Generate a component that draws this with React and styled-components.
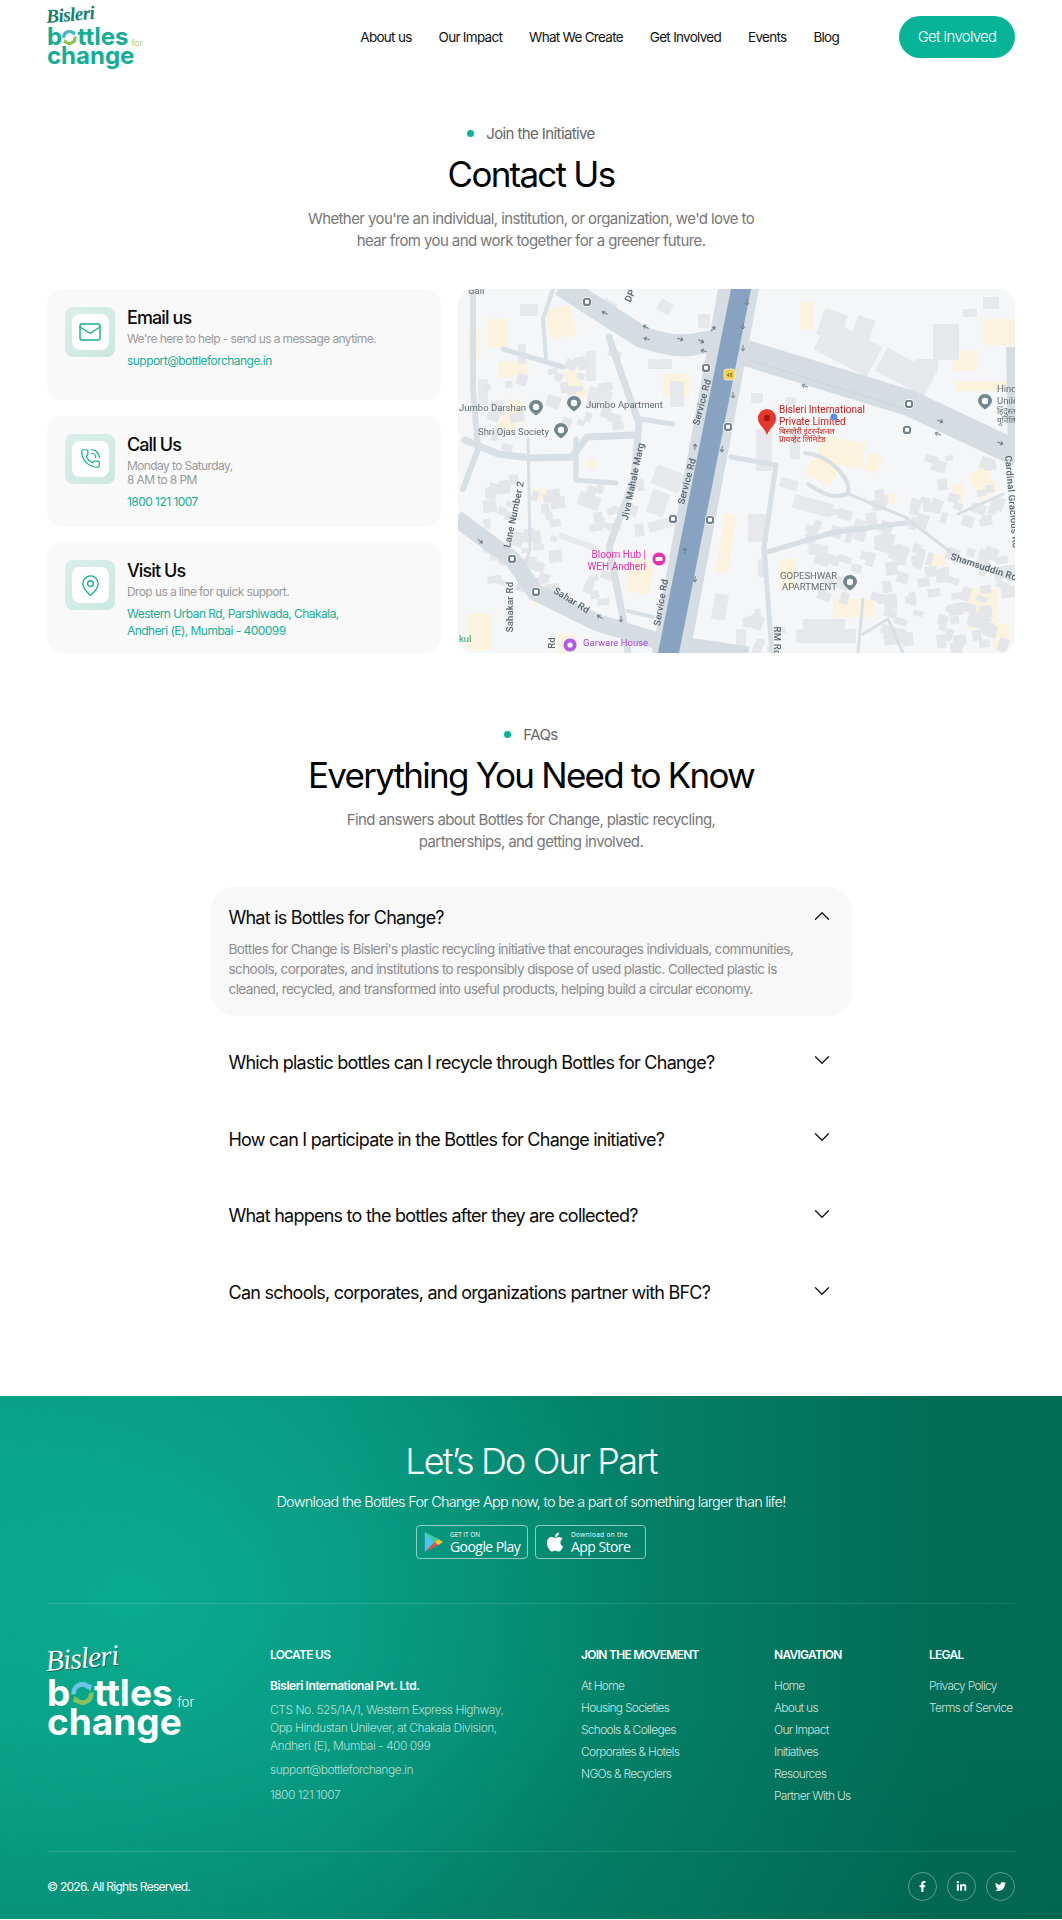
import React from 'react';
import styled, { createGlobalStyle } from 'styled-components';
import { Mail, PhoneCall, MapPin, ChevronUp, ChevronDown } from 'lucide-react';
import { FaApple, FaFacebookF, FaLinkedinIn, FaTwitter } from 'react-icons/fa';

const GlobalStyle = createGlobalStyle`
  * { box-sizing: border-box; }
  html, body { margin: 0; padding: 0; background: #fff; }
  body { font-family: 'Inter', 'Liberation Sans', sans-serif; color: #000; letter-spacing: -0.045em; }
  ul { list-style: none; margin: 0; padding: 0; }
  p, h1, h2, h3, h4 { margin: 0; font-weight: 400; }
`;

const navLinks = ['About us', 'Our Impact', 'What We Create', 'Get Involved', 'Events', 'Blog'];

const faqs = [
  'Which plastic bottles can I recycle through Bottles for Change?',
  'How can I participate in the Bottles for Change initiative?',
  'What happens to the bottles after they are collected?',
  'Can schools, corporates, and organizations partner with BFC?',
];

const footerColumns = [
  { title: 'JOIN THE MOVEMENT', items: ['At Home', 'Housing Societies', 'Schools & Colleges', 'Corporates & Hotels', 'NGOs & Recyclers'] },
  { title: 'NAVIGATION', items: ['Home', 'About us', 'Our Impact', 'Initiatives', 'Resources', 'Partner With Us'] },
  { title: 'LEGAL', items: ['Privacy Policy', 'Terms of Service'] },
];

// map data, in map pixels (557 x 364)
const minorRoads = [
  ['M151 48 L165 90 L181 134 L176 190 L151 258 L166 334 L170 364', 7],
  ['M7 151 L40 165 L73 169 L114 168 L129 148 L177 146', 7],
  ['M118 150 L118 191 L158 194', 5],
  ['M273 168 L318 176 L306 258 L314 364', 5],
  ['M306 264 L373 244 L447 234', 5],
  ['M388 204 L447 228 L499 268 L554 291', 3],
  ['M347 164 C 370 165 395 190 390 205 C 375 210 365 205 350 195', 4],
  ['M15 0 L15 100 L20 160 L5 200', 6],
  ['M70 150 L72 260 L60 300', 3],
  ['M45 60 L105 78', 5],
  ['M95 0 L85 30 L88 70', 4],
  ['M182 130 L215 135', 5],
  ['M170 322 L195 328', 4],
  ['M500 225 L545 205', 3],
  ['M400 364 L405 310 M405 345 L430 330 L445 364', 3],
];

const grayBlocks = [
  [360, 42, 60, 34, 28], [420, 70, 55, 26, 28], [362, 22, 24, 28, 20], [395, 28, 18, 30, 20],
  [293, 104, 12, 10, 0], [328, 108, 10, 8, 0], [298, 140, 16, 42, 0], [290, 225, 20, 28, 0],
  [475, 35, 26, 36, 0], [458, 70, 22, 14, 0], [505, 20, 14, 8, 0], [525, 8, 16, 12, 0],
  [128, 62, 10, 30, 0], [60, 55, 8, 20, 0], [120, 205, 22, 14, 20], [190, 230, 30, 10, -15],
  [335, 210, 40, 14, 15], [350, 255, 20, 12, 10], [300, 270, 10, 18, 0], [338, 340, 60, 14, 0],
  [145, 12, 14, 6, 30], [240, 25, 12, 14, 0], [188, 205, 24, 18, -70], [200, 175, 20, 30, -70],
  [100, 250, 40, 6, 20], [345, 330, 42, 16, 0], [278, 340, 10, 20, 0], [255, 305, 14, 26, 10],
  [212, 92, 14, 26, 0], [190, 70, 24, 10, 0], [130, 100, 24, 12, 15], [20, 90, 10, 26, 0],
  [62, 15, 18, 12, 0], [200, 12, 14, 12, 30], [332, 140, 10, 30, 0], [322, 190, 18, 10, 15],
];

const tanBlocks = [
  [30, 30, 20, 28, 0], [90, 18, 26, 30, -12], [205, 85, 26, 22, 0], [342, 12, 14, 28, 0],
  [360, 150, 46, 26, 10], [350, 172, 28, 20, 30], [495, 62, 24, 20, 0], [525, 30, 32, 26, 0],
  [498, 92, 50, 10, 0], [262, 225, 12, 60, 8], [4, 235, 22, 14, 35], [10, 325, 24, 36, 0],
  [70, 290, 20, 24, -20], [170, 270, 24, 34, 10], [322, 270, 16, 30, 0], [375, 310, 40, 18, 0],
  [100, 345, 18, 19, 0], [510, 300, 30, 40, 0], [515, 180, 20, 28, -30], [45, 110, 16, 34, 20],
  [210, 290, 8, 20, 8], [420, 250, 16, 10, 0], [110, 80, 14, 30, -25], [40, 72, 30, 16, 0],
  [10, 40, 12, 30, 0], [130, 170, 8, 10, 0], [408, 165, 14, 18, 20], [495, 195, 10, 24, 0],
  [470, 265, 18, 12, 0], [425, 205, 12, 10, 0], [75, 200, 14, 10, 0], [535, 335, 16, 26, 0],
];

const clusters = [
  [25, 185, 70, 110, 46], [415, 245, 130, 110, 76], [345, 200, 80, 50, 18], [445, 165, 90, 70, 26],
  [85, 55, 70, 80, 20], [125, 185, 55, 55, 14], [25, 85, 35, 70, 10], [280, 310, 50, 50, 8],
  [355, 260, 60, 50, 14], [120, 270, 30, 60, 6],
];

const makeScatter = () => {
  let seed = 17;
  const next = () => {
    seed = (seed * 16807) % 2147483647;
    return seed / 2147483647;
  };
  const out = [];
  clusters.forEach(([x, y, w, h, n]) => {
    for (let i = 0; i < n; i += 1) {
      out.push([x + next() * w, y + next() * h, 6 + next() * 9, 5 + next() * 9, next() > 0.5 ? 18 : -8]);
    }
  });
  return out;
};
const scatterBlocks = makeScatter();

const busStops = [[129, 13], [248, 79], [270, 138], [215, 230], [252, 231], [54, 270], [78, 303], [451, 115], [449, 141]];

const trafficArrows = [
  [147, 24, 205], [188, 38, 210], [189, 50, 195], [222, 50, 15], [243, 52, 30], [246, 62, 195], [255, 40, 315],
  [289, 13, 90], [285, 37, 90], [285, 59, 90], [275, 106, 90], [264, 160, 95], [237, 158, 275], [227, 262, 275],
  [237, 290, 95], [347, 97, 200], [482, 132, 20], [480, 145, 200], [542, 154, 20], [22, 252, 40], [163, 330, 90], [142, 328, 210],
];

const greyPins = [[78, 118], [116, 114], [103, 141], [392, 293], [527, 112]];

const mapLabels = [
  { x: 1, y: 122, text: 'Jumbo Darshan' },
  { x: 128, y: 119, text: 'Jumbo Apartment' },
  { x: 20, y: 146, text: 'Shri Ojas Society' },
  { x: 322, y: 290, text: 'GOPESHWAR' },
  { x: 324, y: 301, text: 'APARTMENT' },
  { x: 539, y: 103, text: 'Hind' },
  { x: 539, y: 115, text: 'Unile' },
  { x: 10, y: 5, text: 'Gali' },
];

const roadLabels = [
  { x: 247, y: 114, r: -75, text: 'Service Rd' },
  { x: 232, y: 193, r: -75, text: 'Service Rd' },
  { x: 206, y: 314, r: -80, text: 'Service Rd' },
  { x: 178, y: 193, r: -78, text: 'Jiva Mahale Marg' },
  { x: 59, y: 226, r: -78, text: 'Lane Number 2' },
  { x: 55, y: 318, r: -90, text: 'Sahakar Rd' },
  { x: 112, y: 314, r: 32, text: 'Sahar Rd' },
  { x: 316, y: 352, r: 90, text: 'RM Rd' },
  { x: 525, y: 281, r: 18, text: 'Shamsuddin Rd' },
  { x: 551, y: 213, r: 85, text: 'Cardinal Gracious Rd' },
  { x: 97, y: 354, r: -90, text: 'Rd' },
  { x: 175, y: 8, r: -65, text: 'DP' },
];

const Page = styled.div`
  width: 100%;
  background: #fff;
`;

const Header = styled.header`
  height: 73px;
  padding: 0 47px;
  display: flex;
  align-items: center;
  justify-content: space-between;
`;

const Nav = styled.nav`
  display: flex;
  align-items: center;
  gap: 27px;
  margin-left: auto;
  margin-right: 60px;
`;

const NavLink = styled.a`
  font-size: 13.5px;
  color: #111;
  white-space: nowrap;
`;

const CtaButton = styled.a`
  width: 116px;
  height: 42px;
  border-radius: 21px;
  background: #07b498;
  color: #fff;
  font-size: 15px;
  font-weight: 300;
  display: flex;
  align-items: center;
  justify-content: center;
`;

const LogoWrap = styled.div`
  display: flex;
  flex-direction: column;
  font-size: ${(p) => p.$size}px;
  color: ${(p) => p.$color};
  line-height: 0.8;
  font-weight: 700;
`;

const LogoBrand = styled.span`
  font-family: 'Liberation Serif', serif;
  font-style: italic;
  font-weight: ${(p) => p.$weight};
  font-size: 0.8em;
  line-height: 1;
  letter-spacing: -0.03em;
  margin-bottom: 0.04em;
  color: ${(p) => p.$color};
  transform: rotate(-5deg);
  transform-origin: left bottom;
  text-shadow: ${(p) => p.$shadow};
`;

const LogoLine = styled.span`
  display: flex;
  align-items: center;
  white-space: nowrap;
  letter-spacing: 0;
`;

const LogoFor = styled.span`
  font-size: 0.36em;
  font-weight: 300;
  margin-left: 0.35em;
  align-self: flex-end;
  color: ${(p) => p.$color};
`;

const Section = styled.section`
  display: flex;
  flex-direction: column;
  align-items: center;
  padding: ${(p) => p.$top}px 47px 0;
`;

const Eyebrow = styled.div`
  display: flex;
  align-items: center;
  gap: 12px;
  height: 22px;
  font-size: 15px;
  letter-spacing: -0.04em;
  color: #666;
`;

const Dot = styled.span`
  width: 7px;
  height: 7px;
  border-radius: 50%;
  background: #07b498;
`;

const Title = styled.h2`
  margin-top: 7px;
  font-size: 35px;
  line-height: 46px;
  letter-spacing: -0.05em;
  color: #000;
`;

const Lead = styled.p`
  margin-top: 11px;
  width: ${(p) => p.$width}px;
  font-size: 15px;
  line-height: 22px;
  letter-spacing: -0.04em;
  color: #777;
  text-align: center;
`;

const ContactGrid = styled.div`
  width: 100%;
  margin-top: 37px;
  display: grid;
  grid-template-columns: 394px 1fr;
  column-gap: 17px;
`;

const CardStack = styled.div`
  display: grid;
  grid-template-rows: repeat(3, 111px);
  row-gap: 15.5px;
`;

const ContactCard = styled.article`
  display: flex;
  gap: 12px;
  padding: 17px 18px;
  border-radius: 16px;
  background: #f9f9f9;
`;

const IconTile = styled.div`
  width: 50px;
  height: 50px;
  flex: none;
  margin-top: 1px;
  padding: 7px 6.5px;
  border-radius: 8px;
  background: linear-gradient(135deg, #dcefea, #c9e8e0);
`;

const IconInner = styled.div`
  width: 100%;
  height: 100%;
  border-radius: 8px;
  background: #fff;
  color: #14ae96;
  display: flex;
  align-items: center;
  justify-content: center;
`;

const CardBody = styled.div`
  display: flex;
  flex-direction: column;
`;

const CardTitle = styled.h3`
  font-size: 18px;
  line-height: 24px;
  font-weight: 500;
  letter-spacing: -0.05em;
  color: #0a0a0a;
`;

const CardText = styled.p`
  font-size: 12px;
  line-height: 14.5px;
  letter-spacing: -0.05em;
  color: #9a9a9a;
  margin-top: 2px;
`;

const CardLink = styled.p`
  font-size: 12px;
  line-height: 17.5px;
  letter-spacing: -0.045em;
  color: #17ae97;
  margin-top: 5px;
`;

const MapPanel = styled.div`
  height: 364px;
  border-radius: 16px;
  overflow: hidden;
  background: #f5f6f7;
`;

const MapSvg = styled.svg`
  display: block;
  width: 100%;
  height: 100%;
  font-family: 'Roboto', 'Noto Sans', sans-serif;
  letter-spacing: 0;
  filter: blur(0.35px);
`;

const Accordion = styled.div`
  width: 641px;
  margin-top: 34px;
  margin-bottom: 73px;
  display: flex;
  flex-direction: column;
  gap: 15.75px;
`;

const FaqItem = styled.div`
  padding: 18px 17px ${(p) => (p.$open ? 17 : 18)}px 18px;
  border-radius: 24px;
  background: ${(p) => (p.$open ? '#f8f8f8' : 'transparent')};
`;

const FaqHead = styled.div`
  display: flex;
  align-items: center;
  justify-content: space-between;
  color: #111;
`;

const FaqChevron = styled.span`
  display: flex;
  height: 25px;
  align-items: center;
  margin-top: -4px;
`;

const FaqQuestion = styled.h4`
  font-size: 18px;
  line-height: 25px;
  font-weight: 400;
  letter-spacing: -0.042em;
  color: #0a0a0a;
`;

const FaqAnswer = styled.p`
  margin-top: 9px;
  width: 580px;
  font-size: 13.5px;
  line-height: 20px;
  letter-spacing: -0.042em;
  color: #8c8c8c;
`;

const Footer = styled.footer`
  height: 523px;
  padding: 42px 47px 20px;
  color: #fff;
  background:
    radial-gradient(ellipse 520px 400px at 13% 38%, rgba(12, 184, 155, 0.6) 0%, rgba(12, 184, 155, 0) 100%),
    linear-gradient(180deg, rgba(0, 60, 50, 0) 60%, rgba(0, 60, 50, 0.12) 100%),
    linear-gradient(90deg, #079a80 0%, #06917a 30%, #037f66 62%, #016d55 88%, #016c54 100%);
`;

const Cta = styled.div`
  display: flex;
  flex-direction: column;
  align-items: center;
`;

const CtaTitle = styled.h2`
  font-size: 36px;
  line-height: 46px;
  font-weight: 300;
  letter-spacing: -0.05em;
`;

const CtaText = styled.p`
  margin-top: 6px;
  font-size: 14.5px;
  line-height: 24px;
  font-weight: 300;
  letter-spacing: -0.05em;
`;

const StoreRow = styled.div`
  margin-top: 11px;
  display: flex;
  gap: 7px;
`;

const StoreButton = styled.a`
  width: ${(p) => p.$width}px;
  height: 34px;
  padding-left: ${(p) => p.$pad}px;
  border: 1px solid rgba(255, 255, 255, 0.55);
  border-radius: 4px;
  display: flex;
  align-items: center;
  gap: ${(p) => p.$gap}px;
`;

const StoreText = styled.span`
  display: flex;
  flex-direction: column;
  white-space: nowrap;
  font-family: 'Open Sans', sans-serif;
`;

const StoreSmall = styled.span`
  font-size: 6.5px;
  line-height: 9px;
  font-weight: 500;
  letter-spacing: ${(p) => (p.$spaced ? '0.05em' : '-0.01em')};
`;

const StoreBig = styled.span`
  font-size: 14px;
  line-height: 15px;
  font-weight: 500;
  letter-spacing: -0.04em;
`;

const Rule = styled.hr`
  margin: ${(p) => p.$margin};
  border: 0;
  height: 1px;
  background: rgba(255, 255, 255, 0.12);
`;

const FooterGrid = styled.div`
  display: grid;
  grid-template-columns: 223px 311px 193px 155px 1fr;
  height: 204px;
`;

const FooterHead = styled.h4`
  font-size: 12px;
  line-height: 16px;
  font-weight: 600;
  margin-bottom: 12px;
  white-space: nowrap;
`;

const FooterItem = styled.li`
  font-size: 12px;
  line-height: 22px;
  font-weight: 300;
  color: rgba(255, 255, 255, 0.82);
  white-space: nowrap;
`;

const FooterCompany = styled.p`
  font-size: 12px;
  line-height: 22px;
  font-weight: 600;
  letter-spacing: -0.035em;
  margin-bottom: 4px;
`;

const FooterAddress = styled.p`
  font-size: 12px;
  line-height: 18px;
  font-weight: 300;
  letter-spacing: -0.04em;
  color: rgba(255, 255, 255, 0.7);
  margin-bottom: ${(p) => p.$gap}px;
`;

const FooterBottom = styled.div`
  display: flex;
  align-items: center;
  justify-content: space-between;
`;

const Copyright = styled.p`
  font-size: 12px;
  font-weight: 400;
`;

const SocialRow = styled.div`
  display: flex;
  gap: 10px;
`;

const SocialIcon = styled.a`
  width: 29px;
  height: 29px;
  border: 1px solid rgba(255, 255, 255, 0.35);
  border-radius: 50%;
  font-size: 11px;
  display: flex;
  align-items: center;
  justify-content: center;
`;

const LoopO = ({ left, right }) => (
  <svg viewBox="0 0 24 24" width="0.62em" height="0.62em" style={{ margin: '0.06em 0.01em 0' }}>
    <path d="M3 13 A9 9 0 0 1 19 6" fill="none" stroke={left} strokeWidth="5" />
    <path d="M15 2 L22 3 L20 10 Z" fill={left} />
    <path d="M21 11 A9 9 0 0 1 5 18" fill="none" stroke={right} strokeWidth="5" />
    <path d="M9 22 L2 21 L4 14 Z" fill={right} />
  </svg>
);

const Logo = ({ size, color, brandColor, brandWeight, brandShadow, forColor, loopLeft, loopRight }) => (
  <LogoWrap $size={size} $color={color}>
    <LogoBrand $color={brandColor} $weight={brandWeight} $shadow={brandShadow}>Bisleri</LogoBrand>
    <LogoLine>
      b<LoopO left={loopLeft} right={loopRight} />ttles
      <LogoFor $color={forColor}>for</LogoFor>
    </LogoLine>
    <LogoLine>change</LogoLine>
  </LogoWrap>
);

const BusStop = ({ x, y }) => (
  <g transform={`translate(${x} ${y})`}>
    <rect x="-4.5" y="-4.5" width="9" height="9" rx="3" fill="#6d7f8a" stroke="#fff" strokeWidth="1" />
    <rect x="-2" y="-2.2" width="4" height="4" rx="0.8" fill="#fff" />
  </g>
);

const GreyPin = ({ x, y }) => (
  <g transform={`translate(${x} ${y})`}>
    <path d="M-7.5 0 A7.5 7.5 0 1 1 7.5 0 Q7 4 0 9 Q-7 4 -7.5 0 Z" fill="#72868f" stroke="#fff" strokeWidth="0.8" />
    <circle r="3.2" fill="#fff" />
  </g>
);

const MapDrawing = () => (
  <MapSvg viewBox="0 0 557 364" preserveAspectRatio="none">
    <rect width="557" height="364" fill="#f5f6f7" />
    {tanBlocks.map(([x, y, w, h, r], i) => (
      <rect key={`t${i}`} x={x} y={y} width={w} height={h} rx="1" fill="#fbf3de" transform={`rotate(${r} ${x + w / 2} ${y + h / 2})`} />
    ))}
    {grayBlocks.map(([x, y, w, h, r], i) => (
      <rect key={`g${i}`} x={x} y={y} width={w} height={h} rx="1" fill="#e6e8ec" transform={`rotate(${r} ${x + w / 2} ${y + h / 2})`} />
    ))}
    {scatterBlocks.map(([x, y, w, h, r], i) => (
      <rect key={`s${i}`} x={x} y={y} width={w} height={h} fill="#e4e6ea" transform={`rotate(${r} ${x + w / 2} ${y + h / 2})`} />
    ))}
    {minorRoads.map(([d, w], i) => (
      <path key={`m${i}`} d={d} fill="none" stroke="#d8dfe5" strokeWidth={w} strokeLinejoin="round" strokeLinecap="round" />
    ))}
    <path d="M103 -4 L129 13 L184 48 Q212 58 232 56 L266 50" fill="none" stroke="#d5dde3" strokeWidth="22" />
    <path d="M288 64 L451 114 L560 165" fill="none" stroke="#d5dde3" strokeWidth="26" />
    <path d="M554 58 L556 170" fill="none" stroke="#d5dde3" strokeWidth="12" />
    <path d="M-2 229 L55 271 L77 303 L140 334 L203 353 L290 366" fill="none" stroke="#d5dde3" strokeWidth="17" />
    <polygon points="260,0 301,0 232,364 194,364" fill="#d5dde3" />
    <polygon points="273,0 293,0 221,364 200,364" fill="#88a2c1" />
    <path d="M288 70 L451 121" fill="none" stroke="#c3ccd3" strokeWidth="0.6" />

    {trafficArrows.map(([x, y, r], i) => (
      <path key={`a${i}`} d="M-3 0 L3 0 M0.5 -2 L3 0 L0.5 2" transform={`translate(${x} ${y}) rotate(${r})`} fill="none" stroke="#6f7f88" strokeWidth="1" />
    ))}
    {busStops.map(([x, y]) => <BusStop key={`${x}-${y}`} x={x} y={y} />)}
    {greyPins.map(([x, y]) => <GreyPin key={`${x}-${y}`} x={x} y={y} />)}

    <rect x="266" y="80" width="11" height="11" rx="2.5" fill="#f4d04f" stroke="#fff" strokeWidth="0.6" />
    <text x="271.5" y="88" fontSize="5.5" textAnchor="middle" fill="#6d5a10">48</text>

    <g fontSize="9.5" fill="#5f6d75">
      {mapLabels.map((l) => <text key={l.text} x={l.x} y={l.y}>{l.text}</text>)}
      <text x="539" y="125" fontSize="8">हिंदुस्तान</text>
      <text x="539" y="134" fontSize="8">युनिलिव्हर</text>
    </g>
    <g fontSize="9.5" fill="#55636b" fontWeight="500" letterSpacing="0.2">
      {roadLabels.map((l) => (
        <text key={`${l.text}${l.x}`} textAnchor="middle" transform={`translate(${l.x} ${l.y}) rotate(${l.r})`}>{l.text}</text>
      ))}
    </g>

    <path d="M309 146 C306 138 300 136 300 129 A9 9 0 1 1 318 129 C318 136 312 138 309 146 Z" fill="#e8362d" />
    <circle cx="309" cy="129" r="3.2" fill="#a31912" />
    <g fontSize="10" fill="#c5221f">
      <text x="321" y="124">Bisleri International</text>
      <text x="321" y="135.5">Private Limited</text>
      <text x="321" y="145" fontSize="8">बिसलेरी इंटरनॅशनल</text>
      <text x="321" y="153" fontSize="8">प्रायव्हेट लिमिटेड</text>
    </g>
    <circle cx="376" cy="128" r="3.5" fill="#5b8def" />

    <g fontSize="10" fill="#e134b0">
      <text x="188" y="269" textAnchor="end">Bloom Hub |</text>
      <text x="188" y="281" textAnchor="end">WEH Andheri</text>
    </g>
    <circle cx="201" cy="270" r="7" fill="#e134b0" stroke="#fff" strokeWidth="0.8" />
    <rect x="197.5" y="268" width="7" height="4" rx="1" fill="#fff" />

    <text x="125" y="357" fontSize="9.5" fill="#a346d8">Garware House</text>
    <circle cx="112" cy="356" r="7" fill="#b35ae3" stroke="#fff" strokeWidth="0.8" />
    <circle cx="112" cy="356" r="2.6" fill="#fff" />
    <text x="1" y="353" fontSize="9.5" fill="#2f9c6a">kul</text>
  </MapSvg>
);

const PlayIcon = () => (
  <svg viewBox="0 0 24 26" width="20" height="22">
    <path d="M1 1 L13 13 L1 25 Z" fill="#4fc3f0" />
    <path d="M1 1 L17 9.5 L13 13 Z" fill="#38d58a" />
    <path d="M1 25 L17 16.5 L13 13 Z" fill="#e9504f" />
    <path d="M17 9.5 L23 13 L17 16.5 L13 13 Z" fill="#fbc531" />
  </svg>
);

const App = () => (
  <Page>
    <GlobalStyle />
    <Header>
      <Logo size={24} color="#14ae96" brandColor="#157f70" brandWeight={700} forColor="#8cc152" loopLeft="#45b6c6" loopRight="#8cc152" />
      <Nav>
        {navLinks.map((link) => <NavLink key={link}>{link}</NavLink>)}
      </Nav>
      <CtaButton>Get Involved</CtaButton>
    </Header>

    <Section $top={49}>
      <Eyebrow><Dot />Join the Initiative</Eyebrow>
      <Title>Contact Us</Title>
      <Lead $width={460}>
        Whether you're an individual, institution, or organization, we'd love to hear from you and work together for a greener future.
      </Lead>
      <ContactGrid>
        <CardStack>
          <ContactCard>
            <IconTile><IconInner><Mail size={24} strokeWidth={1.4} /></IconInner></IconTile>
            <CardBody>
              <CardTitle>Email us</CardTitle>
              <CardText>We're here to help - send us a message anytime.</CardText>
              <CardLink>support@bottleforchange.in</CardLink>
            </CardBody>
          </ContactCard>
          <ContactCard>
            <IconTile><IconInner><PhoneCall size={21} strokeWidth={1.4} /></IconInner></IconTile>
            <CardBody>
              <CardTitle>Call Us</CardTitle>
              <CardText>Monday to Saturday,<br />8 AM to 8 PM</CardText>
              <CardLink>1800 121 1007</CardLink>
            </CardBody>
          </ContactCard>
          <ContactCard>
            <IconTile><IconInner><MapPin size={23} strokeWidth={1.4} /></IconInner></IconTile>
            <CardBody>
              <CardTitle>Visit Us</CardTitle>
              <CardText>Drop us a line for quick support.</CardText>
              <CardLink>Western Urban Rd, Parshiwada, Chakala,<br />Andheri (E), Mumbai - 400099</CardLink>
            </CardBody>
          </ContactCard>
        </CardStack>
        <MapPanel><MapDrawing /></MapPanel>
      </ContactGrid>
    </Section>

    <Section $top={70}>
      <Eyebrow><Dot />FAQs</Eyebrow>
      <Title>Everything You Need to Know</Title>
      <Lead $width={400}>
        Find answers about Bottles for Change, plastic recycling, partnerships, and getting involved.
      </Lead>
      <Accordion>
        <FaqItem $open>
          <FaqHead>
            <FaqQuestion>What is Bottles for Change?</FaqQuestion>
            <FaqChevron><ChevronUp size={26} strokeWidth={1.2} /></FaqChevron>
          </FaqHead>
          <FaqAnswer>
            Bottles for Change is Bisleri's plastic recycling initiative that encourages individuals, communities, schools, corporates, and institutions to responsibly dispose of used plastic. Collected plastic is cleaned, recycled, and transformed into useful products, helping build a circular economy.
          </FaqAnswer>
        </FaqItem>
        {faqs.map((q) => (
          <FaqItem key={q}>
            <FaqHead>
              <FaqQuestion>{q}</FaqQuestion>
              <FaqChevron><ChevronDown size={26} strokeWidth={1.2} /></FaqChevron>
            </FaqHead>
          </FaqItem>
        ))}
      </Accordion>
    </Section>

    <Footer>
      <Cta>
        <CtaTitle>Let’s Do Our Part</CtaTitle>
        <CtaText>Download the Bottles For Change App now, to be a part of something larger than life!</CtaText>
        <StoreRow>
          <StoreButton $width={112} $pad={7} $gap={6}>
            <PlayIcon />
            <StoreText>
              <StoreSmall>GET IT ON</StoreSmall>
              <StoreBig>Google Play</StoreBig>
            </StoreText>
          </StoreButton>
          <StoreButton $width={111} $pad={8} $gap={5}>
            <FaApple size={22} />
            <StoreText>
              <StoreSmall $spaced>Download on the</StoreSmall>
              <StoreBig>App Store</StoreBig>
            </StoreText>
          </StoreButton>
        </StoreRow>
      </Cta>
      <Rule $margin="44px 0 43px" />
      <FooterGrid>
        <Logo size={37} color="#fff" brandColor="#fff" brandWeight={400} brandShadow="1px 1px 0 rgba(0,50,40,0.6)" forColor="#fff" loopLeft="#6cc4e8" loopRight="#86c25a" />
        <div>
          <FooterHead>LOCATE US</FooterHead>
          <FooterCompany>Bisleri International Pvt. Ltd.</FooterCompany>
          <FooterAddress $gap={6}>
            CTS No. 525/1A/1, Western Express Highway,<br />
            Opp Hindustan Unilever, at Chakala Division,<br />
            Andheri (E), Mumbai - 400 099
          </FooterAddress>
          <FooterAddress $gap={7}>support@bottleforchange.in</FooterAddress>
          <FooterAddress $gap={0}>1800 121 1007</FooterAddress>
        </div>
        {footerColumns.map((col) => (
          <div key={col.title}>
            <FooterHead>{col.title}</FooterHead>
            <ul>
              {col.items.map((item) => <FooterItem key={item}>{item}</FooterItem>)}
            </ul>
          </div>
        ))}
      </FooterGrid>
      <Rule $margin="0 0 20px" />
      <FooterBottom>
        <Copyright>© 2026. All Rights Reserved.</Copyright>
        <SocialRow>
          <SocialIcon><FaFacebookF /></SocialIcon>
          <SocialIcon><FaLinkedinIn /></SocialIcon>
          <SocialIcon><FaTwitter /></SocialIcon>
        </SocialRow>
      </FooterBottom>
    </Footer>
  </Page>
);

export default App;
